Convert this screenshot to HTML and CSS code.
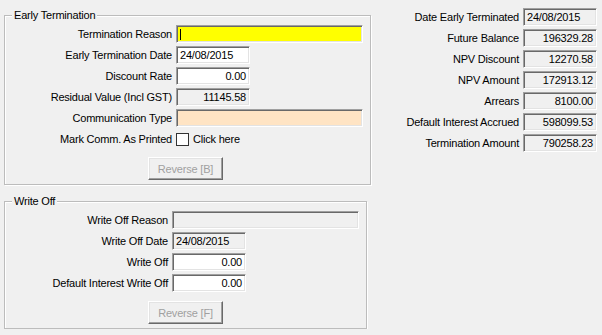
FILE: index.html
```
<!DOCTYPE html>
<html lang="en">

<head>
    <meta charset="UTF-8">
    <title>Early Termination</title>
    <link rel="stylesheet" href="styles.css">
</head>

<body>
    <div class="form">
        <div class="left">
            <div class="group group-et">
                <div class="group-title">Early Termination</div>
                <div class="rows">
                    <div class="row">
                        <span class="lbl">Termination Reason</span>
                        <span class="box box-yellow box-wide"><span class="caret"></span></span>
                    </div>
                    <div class="row">
                        <span class="lbl">Early Termination Date</span>
                        <span class="box box-short">24/08/2015</span>
                    </div>
                    <div class="row">
                        <span class="lbl">Discount Rate</span>
                        <span class="box box-short num">0.00</span>
                    </div>
                    <div class="row">
                        <span class="lbl">Residual Value (Incl GST)</span>
                        <span class="box box-short num ro">11145.58</span>
                    </div>
                    <div class="row">
                        <span class="lbl">Communication Type</span>
                        <span class="box box-peach box-wide"></span>
                    </div>
                    <div class="row">
                        <span class="lbl">Mark Comm. As Printed</span>
                        <span class="check"><span class="check-box"></span>Click here</span>
                    </div>
                </div>
                <button class="btn" disabled>Reverse [B]</button>
            </div>

            <div class="group group-wo">
                <div class="group-title">Write Off</div>
                <div class="rows">
                    <div class="row">
                        <span class="lbl">Write Off Reason</span>
                        <span class="box box-wide ro"></span>
                    </div>
                    <div class="row">
                        <span class="lbl">Write Off Date</span>
                        <span class="box box-short ro">24/08/2015</span>
                    </div>
                    <div class="row">
                        <span class="lbl">Write Off</span>
                        <span class="box box-short num">0.00</span>
                    </div>
                    <div class="row">
                        <span class="lbl">Default Interest Write Off</span>
                        <span class="box box-short num">0.00</span>
                    </div>
                </div>
                <button class="btn" disabled>Reverse [F]</button>
            </div>
        </div>

        <div class="summary">
            <span class="lbl">Date Early Terminated</span>
            <span class="box ro">24/08/2015</span>
            <span class="lbl">Future Balance</span>
            <span class="box ro num">196329.28</span>
            <span class="lbl">NPV Discount</span>
            <span class="box ro num">12270.58</span>
            <span class="lbl">NPV Amount</span>
            <span class="box ro num">172913.12</span>
            <span class="lbl">Arrears</span>
            <span class="box ro num">8100.00</span>
            <span class="lbl">Default Interest Accrued</span>
            <span class="box ro num">598099.53</span>
            <span class="lbl">Termination Amount</span>
            <span class="box ro num">790258.23</span>
        </div>
    </div>
</body>

</html>
```

FILE: styles.css
```
body {
    margin: 0;
    background: #f0f0f0;
    font-family: 'Liberation Sans', Arial, sans-serif;
    font-size: 11px;
    letter-spacing: -0.2px;
    color: #000;
}

.form {
    display: flex;
    padding-left: 4px;
}

.left {
    padding-top: 15px;
}

/* group boxes */
.group {
    border: 1px solid #bcbcbc;
    box-shadow: 1px 1px 0 #fff, inset 1px 1px 0 #fff;
    padding: 0 0 4px 0;
}

.group-et {
    width: 365px;
}

.group-wo {
    width: 361px;
    margin-top: 16px;
}

.group-title {
    margin: -7px 0 0 7px;
    padding: 0 2px;
    width: fit-content;
    line-height: 13px;
    background: #f0f0f0;
}

.rows {
    display: grid;
    row-gap: 3px;
    margin-top: 3px;
}

.row {
    display: grid;
    grid-template-columns: 167px auto;
    column-gap: 4px;
    align-items: center;
    height: 18px;
}

.group-wo .row {
    grid-template-columns: 163px auto;
}

.lbl {
    text-align: right;
    white-space: nowrap;
}

/* text boxes */
.box {
    display: block;
    box-sizing: border-box;
    height: 18px;
    border-style: solid;
    border-width: 1px;
    border-color: #a0a0a0 #fff #fff #a0a0a0;
    box-shadow: inset 1px 1px 0 #696969, inset -1px -1px 0 #e3e3e3;
    background: #fff;
    padding: 0 3px 0 3px;
    line-height: 17px;
    white-space: nowrap;
}

.box-wide {
    width: 187px;
}

.box-short {
    width: 74px;
}

.num {
    text-align: right;
}

.ro {
    background: #f0f0f0;
}

.box-yellow {
    background: #ffff00;
}

.box-peach {
    background: #ffe4c4;
}

.caret {
    display: inline-block;
    width: 1px;
    height: 11px;
    margin-top: 3px;
    background: #000;
    vertical-align: top;
}

/* checkbox row */
.check {
    display: flex;
    align-items: center;
    gap: 4px;
}

.check-box {
    width: 11px;
    height: 11px;
    border: 1px solid #333;
    background: #fff;
}

/* buttons */
.btn {
    display: block;
    box-sizing: border-box;
    width: 75px;
    height: 23px;
    margin: 9px 0 0 143px;
    padding: 0;
    font-family: inherit;
    font-size: 11px;
    letter-spacing: -0.2px;
    color: #a0a0a0;
    background: #f0f0f0;
    border-style: solid;
    border-width: 1px;
    border-color: #fff #696969 #696969 #fff;
    box-shadow: inset -1px -1px 0 #a0a0a0, inset 1px 1px 0 #e3e3e3;
}

/* summary on the right */
.summary {
    display: grid;
    grid-template-columns: 138px 74px;
    column-gap: 4px;
    row-gap: 3px;
    align-items: center;
    align-content: start;
    margin: 8px 0 0 10px;
}

.summary .box {
    width: 74px;
}
```
